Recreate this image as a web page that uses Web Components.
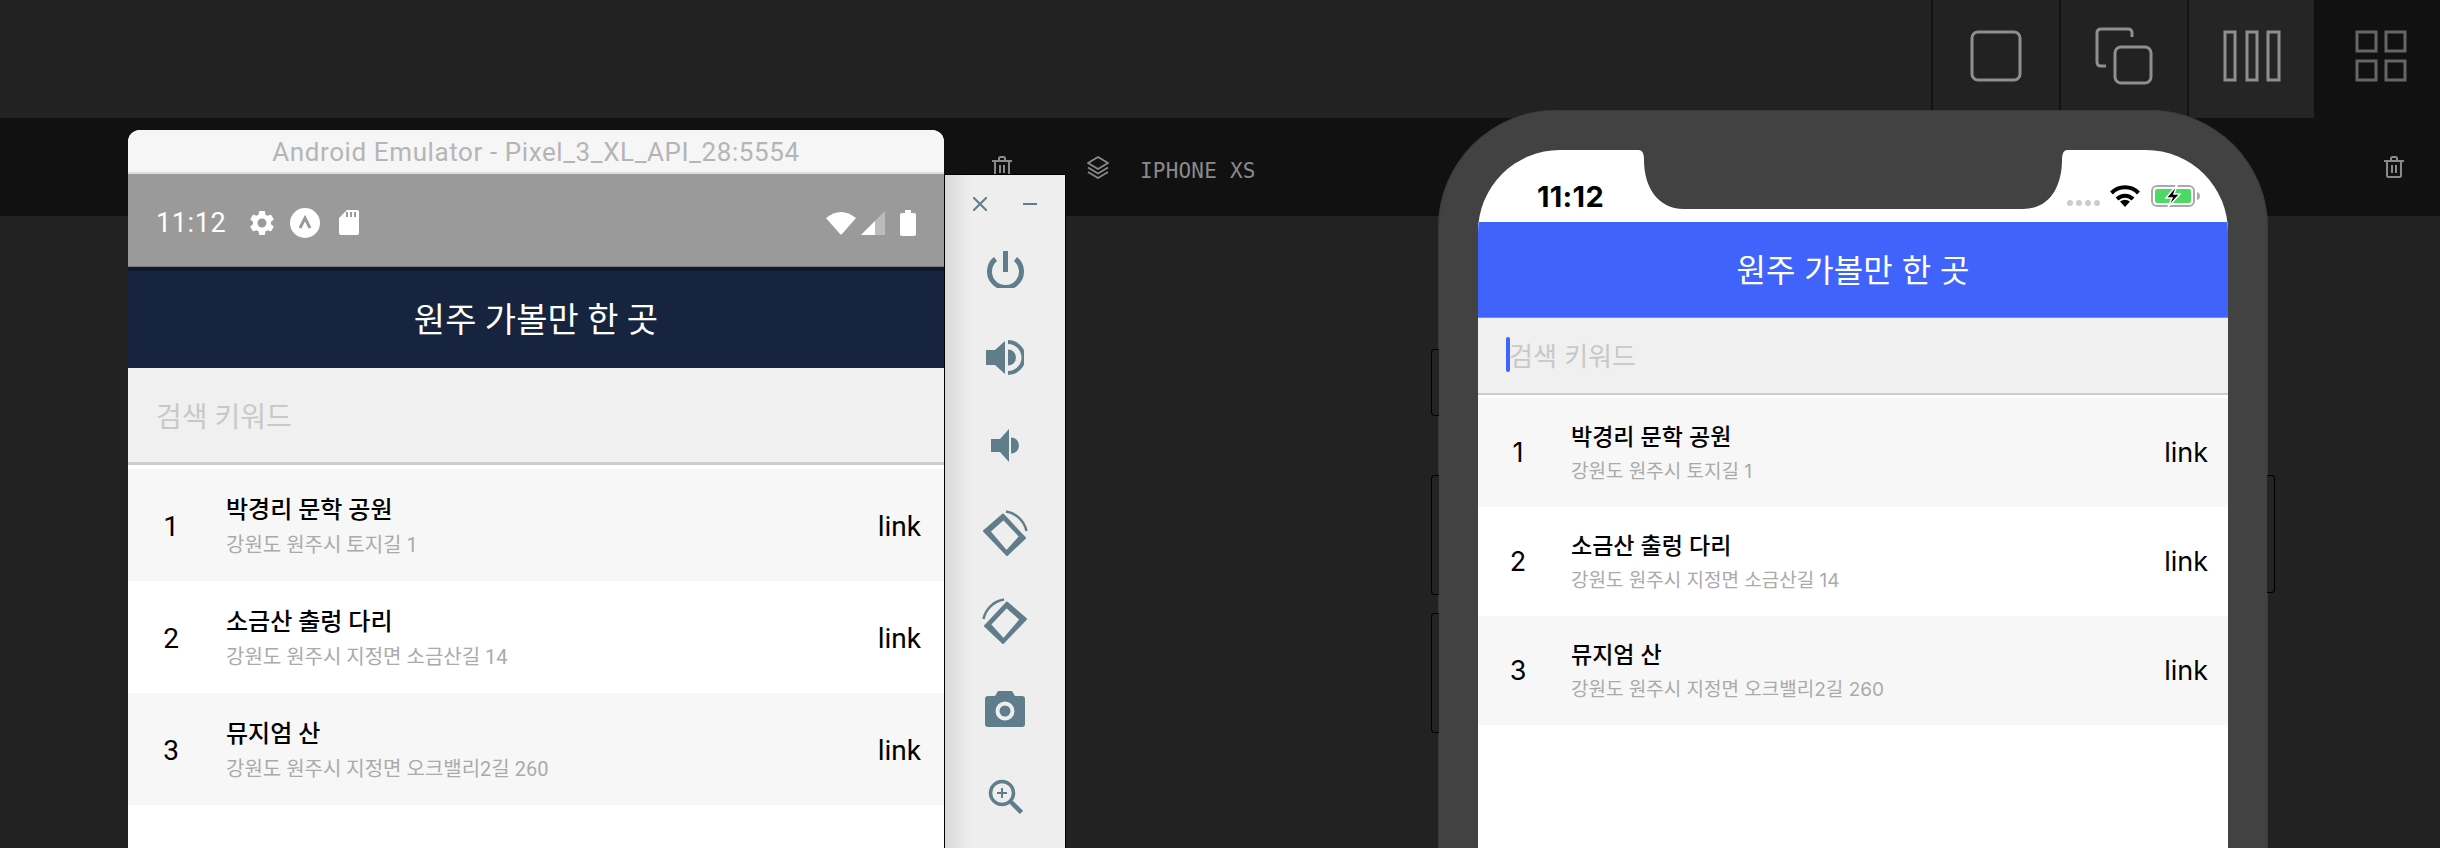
<!DOCTYPE html>
<html lang="ko">
<head>
<meta charset="utf-8">
<title>Simulators</title>
<style>
    html, body {
        margin: 0;
        height: 848px;
        overflow: hidden;
        background: #222;
    }
</style>
</head>
<body>
<sim-app>
    <device-android>
        <search-app heading="원주 가볼만 한 곳" placeholder="검색 키워드">
            <place-row shaded><span slot="num">1</span><span slot="name">박경리 문학 공원</span><span slot="addr">강원도 원주시 토지길 1</span></place-row>
            <place-row><span slot="num">2</span><span slot="name">소금산 출렁 다리</span><span slot="addr">강원도 원주시 지정면 소금산길 14</span></place-row>
            <place-row shaded><span slot="num">3</span><span slot="name">뮤지엄 산</span><span slot="addr">강원도 원주시 지정면 오크밸리2길 260</span></place-row>
        </search-app>
    </device-android>
    <emulator-toolbar></emulator-toolbar>
    <device-iphone>
        <search-app heading="원주 가볼만 한 곳" placeholder="검색 키워드" caret>
            <place-row shaded><span slot="num">1</span><span slot="name">박경리 문학 공원</span><span slot="addr">강원도 원주시 토지길 1</span></place-row>
            <place-row><span slot="num">2</span><span slot="name">소금산 출렁 다리</span><span slot="addr">강원도 원주시 지정면 소금산길 14</span></place-row>
            <place-row shaded><span slot="num">3</span><span slot="name">뮤지엄 산</span><span slot="addr">강원도 원주시 지정면 오크밸리2길 260</span></place-row>
        </search-app>
    </device-iphone>
</sim-app>

<script>
// Small helper so every element below only declares its template string
function defineElement(tag, templateString, extra){
    const template = document.createElement('template');
    template.innerHTML = templateString;
    class Element extends HTMLElement {
        constructor(){
            super();
            this.attachShadow({mode: 'open'});
            this.shadowRoot.append(template.content.cloneNode(true));
        }
        connectedCallback(){
            if(extra){
                extra(this);
            }
        }
    }
    window.customElements.define(tag, Element);
}

const TRASH = `<svg width="20" height="22" viewBox="0 0 20 22" fill="none" stroke="#8a8a8a" stroke-width="2">
    <path d="M0 5h20M7 5V2.500Q7 1 8.500 1h3Q13 1 13 2.500V5M3 5v14.500Q3 21 4.500 21h11q1.500 0 1.500-1.500V5M8 9v8M12 9v8"/>
</svg>`;

const LAYERS = `<svg width="22" height="23" viewBox="0 0 22 23" fill="none" stroke="#8a8a8a" stroke-width="1.800" stroke-linejoin="round">
    <path d="M11 1L21 7L11 13L1 7Z"/>
    <path d="M1 11.500L11 17.500L21 11.500"/>
    <path d="M1 16L11 22L21 16"/>
</svg>`;

// Tilted phone drawn with thick short edges, used for both rotate buttons
const TILT = `<path fill-rule="evenodd" stroke="#607d8b" stroke-width="2" stroke-linejoin="round" d="M2 21L21 4.500L43 28L25 45ZM7.500 21.500L21.500 9L38 26.500L24.500 41.500Z"/>`;

defineElement('sim-app', `
<style>
    :host {
        display: flex;
        flex-direction: column;
        position: relative;
        width: 2440px;
        height: 848px;
        overflow: hidden;
        background: #222;
    }
    .canvas { flex: 1; background: #222; }
</style>
<top-bar></top-bar>
<device-bar></device-bar>
<div class="canvas"></div>
<slot></slot>
`);

defineElement('top-bar', `
<style>
    :host {
        display: flex;
        justify-content: flex-end;
        height: 118px;
        background: #222;
    }
    .tab {
        box-sizing: border-box;
        width: 128px;
        padding-bottom: 6px;
        border-left: 2px solid #131313;
        display: flex;
        align-items: center;
        justify-content: center;
    }
    .tab.wide { background: #252525; width: 127px; }
    .tab.on { background: #111; border-left: 0; width: 126px; padding-left: 7px; }
    svg { display: block; fill: none; stroke: #8f8f8f; stroke-width: 3px; }
    .on svg { stroke: #666; }
</style>
<div class="tab">
    <svg width="52" height="52" viewBox="0 0 52 52"><rect x="2" y="2" width="48" height="48" rx="6"/></svg>
</div>
<div class="tab">
    <svg width="58" height="58" viewBox="0 0 58 58">
        <path d="M37 10V6q0-4-4-4H6Q2 2 2 6v29q0 4 4 4h5"/>
        <rect x="20" y="20" width="36" height="36" rx="6"/>
    </svg>
</div>
<div class="tab wide">
    <svg width="58" height="52" viewBox="0 0 58 52">
        <rect x="2" y="2" width="10" height="48"/>
        <rect x="24" y="2" width="10" height="48"/>
        <rect x="45" y="2" width="11" height="48"/>
    </svg>
</div>
<div class="tab on">
    <svg width="52" height="52" viewBox="0 0 52 52">
        <rect x="2" y="2" width="19" height="19"/>
        <rect x="31" y="2" width="19" height="19"/>
        <rect x="2" y="31" width="19" height="19"/>
        <rect x="31" y="31" width="19" height="19"/>
    </svg>
</div>
`);

defineElement('device-bar', `
<style>
    :host {
        display: flex;
        align-items: center;
        box-sizing: border-box;
        height: 98px;
        padding: 0 36px 0 992px;
        background: #111;
    }
    svg { display: block; }
    .layers { margin-left: 75px; }
    .label {
        margin-left: 31px;
        padding-top: 7px;
        font: 21px "DejaVu Sans Mono", monospace;
        letter-spacing: .2px;
        color: #8a8a8a;
    }
    .end { margin-left: auto; }
</style>
${TRASH}
<div class="layers">${LAYERS}</div>
<div class="label">IPHONE XS</div>
<div class="end">${TRASH}</div>
`);

defineElement('device-android', `
<style>
    :host {
        position: absolute;
        left: 128px;
        top: 130px;
        width: 816px;
        height: 718px;
        display: flex;
        flex-direction: column;
        overflow: hidden;
        border-radius: 12px 12px 0 0;
        background: #fff;
        font-family: Roboto, "Noto Sans CJK KR", sans-serif;
        --title-size: 34px;
        --header-height: 97px;
        --header-bg: #16243f;
        --header-lift: 3px;
        --search-height: 94px;
        --search-size: 28px;
        --search-pad: 28px;
        --search-shift: 0;
        --rule: 3px;
        --rule-gap: 4px;
        --row-height: 112px;
        --num-col: 86px;
        --name-size: 24px;
        --addr-size: 20px;
        --num-size: 28px;
        --row-end: 23px;
        --row-gap: 12px;
        --row-drop: 3px;
        --text-drop: 2px;
        --addr-drop: 2px;
    }
    .title {
        box-sizing: border-box;
        height: 44px;
        line-height: 44px;
        border-bottom: 2px solid #ddd;
        background: #f6f6f6;
        text-align: center;
        font-size: 26px;
        letter-spacing: .6px;
        color: #b5b5b5;
    }
    .status {
        box-sizing: border-box;
        height: 93px;
        padding: 5px 28px 0 28px;
        display: flex;
        align-items: center;
        background: #9a9a9a;
        border-bottom: 1px solid #7d7d7d;
    }
    .time { width: 92px; font-size: 27px; letter-spacing: .6px; color: #fff; }
    .spring { flex: 1; }
    svg { display: block; }
    .shade { height: 4px; background: #0f1a30; }
</style>
<div class="title">Android Emulator - Pixel_3_XL_API_28:5554</div>
<div class="status">
    <span class="time">11:12</span>
    <svg style="margin-left:-1px" width="30" height="30" viewBox="0 0 24 24" fill="#fff"><path fill-rule="evenodd" d="M19.140 12.940c.04-.3.06-.61.06-.94 0-.32-.02-.64-.07-.94l2.030-1.580c.18-.14.23-.41.12-.61l-1.920-3.320c-.12-.22-.37-.29-.59-.22l-2.390.96c-.5-.38-1.030-.7-1.620-.94l-.36-2.540c-.04-.24-.24-.41-.48-.41h-3.840c-.24 0-.43.17-.47.41l-.36 2.540c-.59.24-1.130.57-1.620.94l-2.390-.96c-.22-.08-.47 0-.59.22L2.740 8.870c-.12.21-.08.47.12.61l2.030 1.580c-.05.3-.09.63-.09.94s.02.64.07.94l-2.030 1.580c-.18.14-.23.41-.12.61l1.920 3.320c.12.22.37.29.59.22l2.390-.96c.5.38 1.030.7 1.620.94l.36 2.540c.05.24.24.41.48.41h3.840c.24 0 .44-.17.47-.41l.36-2.540c.59-.24 1.130-.56 1.620-.94l2.390.96c.22.08.47 0 .59-.22l1.920-3.320c.12-.22.07-.47-.12-.61l-2.010-1.580zM12 15.600c-1.980 0-3.600-1.620-3.600-3.600s1.620-3.600 3.600-3.600 3.600 1.620 3.600 3.600-1.620 3.600-3.600 3.600z"/></svg>
    <svg style="margin-left:13px" width="30" height="30" viewBox="0 0 30 30"><circle cx="15" cy="15" r="15" fill="#fff"/><path d="M10 20L15 10L20 20" fill="none" stroke="#9a9a9a" stroke-width="3"/></svg>
    <svg style="margin-left:19px" width="20" height="25" viewBox="0 0 20 25"><path fill="#fff" d="M8 0H18Q20 0 20 2V23Q20 25 18 25H2Q0 25 0 23V8Z"/><path stroke="#9a9a9a" stroke-width="2" d="M8 2V7M12 2V7M16 2V7"/></svg>
    <span class="spring"></span>
    <svg width="30" height="24" viewBox="0 0 30 24"><path fill="#fff" d="M0 7Q15 -5 30 7L16 23Q15 24 14 23Z"/></svg>
    <svg style="margin-left:5px" width="24" height="24" viewBox="0 0 24 24"><path fill="#bcbcbc" d="M24 0V24H0Z"/><path fill="#fff" d="M14 10V24H0Z"/></svg>
    <svg style="margin-left:15px" width="16" height="26" viewBox="0 0 16 26"><path fill="#fff" d="M5 0H11V3H14Q16 3 16 5V24Q16 26 14 26H2Q0 26 0 24V5Q0 3 2 3H5Z"/></svg>
</div>
<div class="shade"></div>
<slot></slot>
`);

defineElement('emulator-toolbar', `
<style>
    :host {
        position: absolute;
        left: 944px;
        top: 174px;
        width: 122px;
        height: 674px;
        box-sizing: border-box;
        border: 1px solid #000;
        border-bottom: 0;
        background: linear-gradient(90deg, #d9d9d9, #eeeeee 26px);
        display: flex;
        flex-direction: column;
        align-items: center;
    }
    .head {
        height: 50px;
        padding-top: 8px;
        box-sizing: border-box;
        display: flex;
        align-items: center;
        gap: 36px;
    }
    .btn {
        height: 88px;
        flex: none;
        display: flex;
        align-items: center;
    }
    svg { display: block; fill: #607d8b; stroke: none; }
    .line { fill: none; stroke: #607d8b; }
</style>
<div class="head">
    <svg width="14" height="14" viewBox="0 0 14 14"><path class="line" stroke-width="2" d="M0 0L14 14M14 0L0 14"/></svg>
    <svg width="14" height="14" viewBox="0 0 14 14"><path class="line" stroke-width="2" d="M0 7H14"/></svg>
</div>
<div class="btn">
    <svg width="37" height="37" viewBox="0 0 37 37"><path class="line" stroke-width="5" d="M8.500 8A16 16 0 1 0 28.500 8"/><path class="line" stroke-width="5" d="M18.500 0V21"/></svg>
</div>
<div class="btn">
    <svg width="38" height="35" viewBox="0 0 38 35"><path d="M0 10H9L19 1V34L9 25H0Z"/><path d="M22 9.500A8 8 0 0 1 22 25.500Z"/><path class="line" stroke-width="4" d="M22 2A15.500 15.500 0 0 1 22 33"/></svg>
</div>
<div class="btn">
    <svg width="29" height="33" viewBox="0 0 29 33"><path d="M0 10H9L18 0V33L9 23H0Z"/><path d="M20 8.500A8 8 0 0 1 20 24.500Z"/></svg>
</div>
<div class="btn">
    <svg width="46" height="47" viewBox="0 0 46 47">${TILT}<path class="line" stroke-width="2.500" d="M24 1.500A25 25 0 0 1 44.500 21"/></svg>
</div>
<div class="btn">
    <svg width="46" height="47" viewBox="0 0 46 47"><g transform="matrix(-1 0 0 1 46 0)">${TILT}<path class="line" stroke-width="2.500" d="M24 1.500A25 25 0 0 1 44.500 21"/></g></svg>
</div>
<div class="btn">
    <svg width="40" height="36" viewBox="0 0 40 36"><path fill-rule="evenodd" d="M13 0H27L30 5H37Q40 5 40 8V33Q40 36 37 36H3Q0 36 0 33V8Q0 5 3 5H10ZM20 10.500A9.500 9.500 0 1 0 20 29.500A9.500 9.500 0 1 0 20 10.500ZM20 14.500A5.500 5.500 0 1 1 20 25.500A5.500 5.500 0 1 1 20 14.500Z"/></svg>
</div>
<div class="btn">
    <svg width="35" height="36" viewBox="0 0 35 36"><circle class="line" stroke-width="3.500" cx="14" cy="14" r="11.500"/><path class="line" stroke-width="2" d="M9 14H19M14 9V19"/><path class="line" stroke-width="4.500" d="M23 23L33.500 33.500"/></svg>
</div>
`);

defineElement('device-iphone', `
<style>
    :host {
        position: absolute;
        left: 1438px;
        top: 110px;
        width: 830px;
        height: 800px;
        box-sizing: border-box;
        padding: 40px 40px 0;
        border-radius: 118px 118px 0 0;
        background: #424242;
        box-shadow: inset 0 0 0 1px #3b3b3b;
        font-family: Inter, "Noto Sans CJK KR", sans-serif;
        --title-size: 32px;
        --header-height: 96px;
        --header-bg: #4063fb;
        --header-line: #6f89fc;
        --header-lift: 3px;
        --search-height: 75px;
        --search-size: 26px;
        --search-pad: 28px;
        --search-shift: 2px;
        --rule: 2px;
        --rule-gap: 3px;
        --row-height: 109px;
        --num-col: 80px;
        --name-size: 23px;
        --addr-size: 19px;
        --num-size: 27px;
        --row-end: 20px;
        --row-gap: 13px;
        --row-drop: 0px;
        --text-drop: 0px;
        --addr-drop: 2px;
    }
    .screen {
        position: relative;
        height: 100%;
        overflow: hidden;
        border-radius: 82px 82px 0 0;
        background: #fff;
    }
    .notch { position: absolute; left: 161px; top: 0; }
    .status {
        box-sizing: border-box;
        height: 72px;
        padding: 20px 28px 0 59px;
        display: flex;
        align-items: center;
    }
    .time { font-size: 29px; font-weight: 700; letter-spacing: .3px; color: #000; }
    .spring { flex: 1; }
    .dots { display: flex; gap: 3px; margin: 14px 10px 0 0; }
    .dots i { width: 6px; height: 6px; border-radius: 50%; background: #ccc; }
    svg { display: block; }
    .key {
        position: absolute;
        left: -7px;
        width: 8px;
        box-sizing: border-box;
        border: 1px solid #000;
        border-right: 0;
        border-radius: 4px 0 0 4px;
        background: #232323;
    }
    .key.right {
        left: auto;
        right: -7px;
        border: 1px solid #000;
        border-left: 0;
        border-radius: 0 4px 4px 0;
    }
</style>
<div class="key" style="top:239px;height:67px"></div>
<div class="key" style="top:365px;height:120px"></div>
<div class="key" style="top:503px;height:120px"></div>
<div class="key right" style="top:365px;height:118px"></div>
<div class="screen">
    <svg class="notch" width="428" height="60" viewBox="0 0 428 60"><path fill="#424242" d="M0 0Q5 0 5 10C5 36 18 59 45 59H384C411 59 423 36 423 10Q423 0 428 0Z"/></svg>
    <div class="status">
        <span class="time">11:12</span>
        <span class="spring"></span>
        <span class="dots"><i></i><i></i><i></i><i></i></span>
        <svg width="30" height="22" viewBox="0 0 30 22" fill="none" stroke="#000" stroke-width="4">
            <path d="M1.500 8A19 19 0 0 1 28.500 8"/>
            <path d="M7 14A11.500 11.500 0 0 1 23 14"/>
            <path fill="#000" stroke="none" d="M10 16.500Q15 13 20 16.500L15 22Z"/>
        </svg>
        <svg style="margin-left:11px" width="49" height="22" viewBox="0 0 49 22">
            <rect x="1" y="1" width="42" height="20" rx="5" fill="none" stroke="#aaa" stroke-width="2"/>
            <rect x="4" y="4" width="36" height="14" rx="2" fill="#4cd964"/>
            <path fill="#aaa" d="M46 7Q49 8 49 11T46 15Z"/>
            <path fill="#000" stroke="#fff" stroke-width="1.500" d="M26 0L15 13H21L17 22L29 9H23Z"/>
        </svg>
    </div>
    <slot></slot>
</div>
`);

// Header, search field and list, sized from the custom properties of its device
defineElement('search-app', `
<style>
    :host {
        display: block;
        flex: 1;
        background: #fff;
    }
    .header {
        box-sizing: border-box;
        height: var(--header-height);
        padding-bottom: var(--header-lift);
        background: var(--header-bg);
        border-bottom: 1px solid var(--header-line, var(--header-bg));
        display: flex;
        align-items: center;
        justify-content: center;
        font-size: var(--title-size);
        color: #fff;
    }
    .search {
        box-sizing: border-box;
        height: var(--search-height);
        padding-left: var(--search-pad);
        padding-bottom: var(--search-shift);
        background: #f0f0f0;
        display: flex;
        align-items: center;
        font-size: var(--search-size);
        color: #c8c8c8;
    }
    .caret { display: none; width: 4px; height: 35px; margin-right: -1px; border-radius: 2px; background: #4063fb; }
    :host([caret]) .caret { display: block; }
    .rule { height: var(--rule); background: #ccc; }
    .gap { height: var(--rule-gap); }
</style>
<div class="header" id="heading"></div>
<div class="search"><span class="caret"></span><span id="placeholder"></span></div>
<div class="rule"></div>
<div class="gap"></div>
<slot></slot>
`, (el) => {
    el.shadowRoot.getElementById('heading').textContent = el.getAttribute('heading');
    el.shadowRoot.getElementById('placeholder').textContent = el.getAttribute('placeholder');
});

defineElement('place-row', `
<style>
    :host {
        display: grid;
        grid-template-columns: var(--num-col) 1fr auto;
        column-gap: var(--row-gap);
        align-items: center;
        height: var(--row-height);
        padding-right: var(--row-end);
        background: #fff;
        color: #000;
    }
    :host([shaded]) { background: #f7f7f7; }
    .num, .link { font-size: var(--num-size); padding-top: var(--row-drop); }
    .num { text-align: center; }
    .text { padding-top: var(--text-drop); }
    .name { font-size: var(--name-size); font-weight: 500; line-height: 36px; }
    .addr { font-size: var(--addr-size); line-height: 30px; padding-top: var(--addr-drop); color: #aaa; }
</style>
<div class="num"><slot name="num"></slot></div>
<div class="text">
    <div class="name"><slot name="name"></slot></div>
    <div class="addr"><slot name="addr"></slot></div>
</div>
<div class="link">link</div>
`);
</script>
</body>
</html>
